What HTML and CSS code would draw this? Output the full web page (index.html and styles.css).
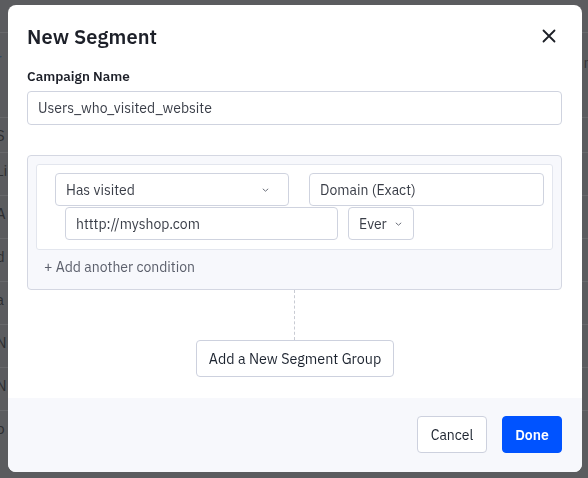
FILE: index.html
```html
<!DOCTYPE html>
<html>
<head>
<meta charset="utf-8">
<link rel="stylesheet" href="styles.css">
</head>
<body>
<div class="page">
  <div class="prow r1"><span class="frag blue">r</span><span class="frag right">n</span></div>
  <div class="prow r2"><span class="frag">S</span></div>
  <div class="prow r3"><span class="frag">Li</span></div>
  <div class="prow r4"><span class="frag">A</span></div>
  <div class="prow r5"><span class="frag">d</span></div>
  <div class="prow r6"><span class="frag">a</span></div>
  <div class="prow r7"><span class="frag">N</span></div>
  <div class="prow r8"><span class="frag">N</span></div>
  <div class="prow r9"><span class="frag">p</span></div>
</div>
<div class="overlay">
  <div class="modal">
    <div class="modal-body">
      <div class="modal-head">
        <h1 class="title">New Segment</h1>
        <svg class="close" width="14" height="14" viewBox="0 0 14 14"><path d="M1.5 1.5L12.5 12.5M12.5 1.5L1.5 12.5" stroke="#1c1f26" stroke-width="1.8" stroke-linecap="round" fill="none"/></svg>
      </div>
      <label class="label">Campaign Name</label>
      <div class="input name-input">Users_who_visited_website</div>
      <div class="group">
        <div class="card">
          <div class="row row1">
            <div class="input select has-visited"><span>Has visited</span><svg class="chev" width="7" height="4" viewBox="0 0 7 4"><path d="M0.8 0.8L3.5 3.2L6.2 0.8" stroke="#6b6f7a" stroke-width="1" fill="none"/></svg></div>
            <div class="input domain">Domain (Exact)</div>
          </div>
          <div class="row row2">
            <div class="input url">htttp://myshop.com</div>
            <div class="input select ever"><span>Ever</span><svg class="chev" width="7" height="4" viewBox="0 0 7 4"><path d="M0.8 0.8L3.5 3.2L6.2 0.8" stroke="#6b6f7a" stroke-width="1" fill="none"/></svg></div>
          </div>
        </div>
        <div class="add-cond">+ Add another condition</div>
      </div>
      <div class="connector"></div>
      <div class="center"><button class="btn">Add a New Segment Group</button></div>
    </div>
    <div class="modal-foot">
      <button class="btn cancel">Cancel</button>
      <button class="btn done">Done</button>
    </div>
  </div>
</div>
</body>
</html>
```
FILE: styles.css
```css
html, body { margin: 0; padding: 0; }
body {
  width: 588px; height: 478px; overflow: hidden;
  background: #5b5c5f;
  font-family: "IBM Plex Sans", Inter, "Noto Sans", sans-serif;
  color: #1d2029;
}
.page { display: flex; flex-direction: column; padding-top: 32px; }
.prow {
  height: 43px; border-top: 1px solid #68696c; position: relative;
  box-sizing: border-box;
}
.prow.r1 { height: 85px; }
.prow.r2 { height: 35px; }
.frag { position: absolute; left: -4px; top: 8px; font-size: 15px; color: #2d2e31; }
.frag.blue { color: #2f4766; top: 16px; }
.frag.right { left: auto; right: -4px; color: #343538; top: 20px; }
.overlay { position: fixed; inset: 0; }
.modal {
  position: absolute; left: 8px; top: 5px; width: 574px; height: 467px;
  background: #fff; border-radius: 8px; overflow: hidden;
  display: flex; flex-direction: column;
}
.modal-body { flex: 1; padding: 0 20px 0 19px; display: flex; flex-direction: column; }
.modal-head { display: flex; justify-content: space-between; align-items: center; height: 62px; }
.title { margin: 0; font-size: 20px; font-weight: 600; color: #1d2029; letter-spacing: 0.1px; }
.close { margin-right: 6px; margin-top: 0px; }
.label { font-size: 13.5px; font-weight: 600; color: #1d2029; margin-top: 0; height: 24px; line-height: 18px; }
.input {
  box-sizing: border-box; height: 34px; border: 1px solid #cfd3df; border-radius: 4px;
  background: #fff; font-size: 14px; color: #3a3e48; display: flex; align-items: center;
  padding: 0 10px;
}
.name-input { height: 34px; }
.group {
  margin-top: 30px; height: 135px; box-sizing: border-box;
  background: #f7f8fc; border: 1px solid #d4d7e2; border-radius: 4px;
  padding: 8px 8px 0 8px;
}
.card {
  height: 86px; box-sizing: border-box; background: #fff; border: 1px solid #e3e6ee; border-radius: 3px;
  padding: 8px 0 0 18px;
}
.row { display: flex; }
.row1 { gap: 20px; }
.row2 { gap: 10px; padding-left: 10px; margin-top: 1px; }
.input.select { justify-content: space-between; }
.chev { margin-right: 9px; }
.has-visited { width: 234px; height: 33px; }
.domain { width: 235px; height: 33px; }
.url { width: 273px; height: 33px; }
.ever { width: 66px; height: 33px; padding-right: 2px; justify-content: flex-start !important; gap: 8px; }
.add-cond { font-size: 14px; color: #5c606c; padding-left: 8px; margin-top: 8px; }
.connector { width: 0; height: 50px; border-left: 1px dashed #c8cbd3; margin-left: 267px; }
.center { display: flex; justify-content: center; padding-left: 1px; }
.btn {
  font-family: inherit; font-size: 14px; color: #1d2430; background: #fff;
  border: 1px solid #cdd1de; border-radius: 4px; height: 37px; padding: 0 12px; cursor: pointer;
}
.center .btn { font-size: 14.3px; width: 198px; padding: 0; }
.modal-foot {
  height: 74px; background: #f7f8fc; display: flex; justify-content: flex-end; align-items: flex-start;
  padding: 18px 20px 0 0; box-sizing: border-box; gap: 15px;
}
.cancel { width: 70px; padding: 0; }
.done { width: 60px; padding: 0; background: #0053ff; border-color: #0053ff; color: #fff; font-weight: 600; }
```
